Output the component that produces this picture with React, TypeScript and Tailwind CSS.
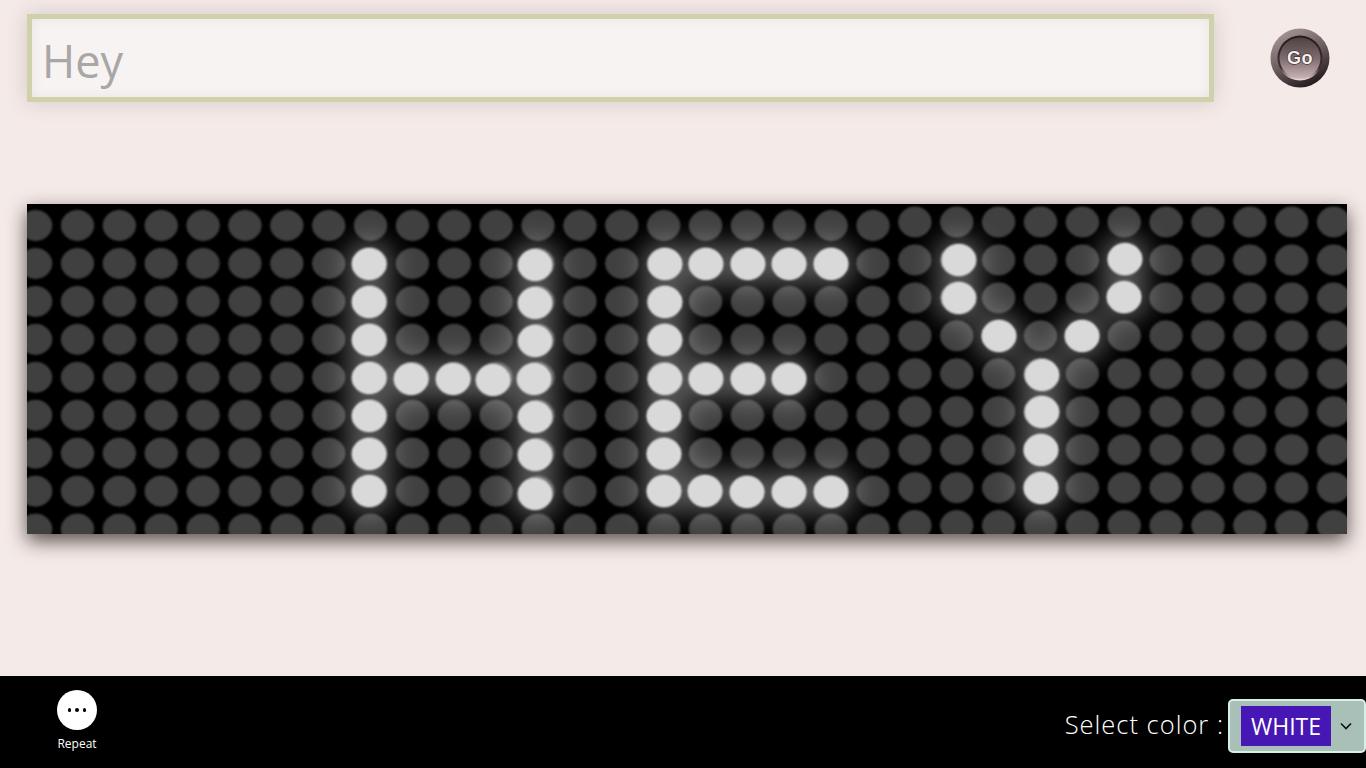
import React from 'react';

const font = { fontFamily: '"Open Sans", "Noto Sans", sans-serif' };

// lit leds of HEY, taken by hand, the photo is a bit wobbly
const lit: [number, number][] = [
  [369, 264], [369, 302], [369, 340], [369, 378], [369, 416], [369, 454], [369, 491],
  [535, 265], [535, 303], [535, 341], [534, 379], [535, 417], [535, 455], [535, 494],
  [411, 379], [453, 379], [493, 380],
  [665, 264], [665, 302], [665, 340], [665, 379], [664, 416], [664, 454], [664, 491],
  [706, 264], [748, 264], [789, 264], [831, 264],
  [706, 379], [748, 379], [789, 379],
  [705, 491], [747, 492], [789, 492], [831, 492],
  [959, 260], [1125, 259], [959, 298], [1124, 297], [999, 336], [1082, 336],
  [1042, 375], [1042, 412], [1041, 450], [1041, 488],
];

const dots: [number, number][] = [];
for (let c = 0; c < 32; c++) {
  for (let r = 0; r < 9; r++) {
    const x = 35.6 + c * 41.87;
    const y = (c > 20 ? 222 : 225.5) + r * 37.95;
    dots.push([x, y]);
  }
}

const LedBoard = () => (
  <svg viewBox="27 204 1320 330" className="block w-full h-full">
    <defs>
      <filter id="glow" x="-50%" y="-50%" width="200%" height="200%">
        <feGaussianBlur stdDeviation="13" />
      </filter>
      <filter id="soft" x="-10%" y="-10%" width="120%" height="120%">
        <feGaussianBlur stdDeviation="0.9" />
      </filter>
    </defs>
    <rect x="27" y="204" width="1320" height="330" fill="#000" />
    <g filter="url(#soft)">
      {dots.map(([x, y], i) => (
        <ellipse key={i} cx={x} cy={y} rx={16.2} ry={15} fill="#3f3f3f" stroke="#494949" strokeWidth={1} />
      ))}
    </g>
    <g filter="url(#glow)" opacity={0.34}>
      {lit.map(([x, y], i) => (
        <ellipse key={i} cx={x} cy={y} rx={25} ry={24} fill="#fff" />
      ))}
    </g>
    <g filter="url(#soft)">
      {lit.map(([x, y], i) => (
        <ellipse key={i} cx={x} cy={y} rx={17} ry={15.6} fill="#d9d9d9" stroke="#ececec" strokeWidth={1} />
      ))}
    </g>
  </svg>
);

const GoButton = () => (
  <svg width="60" height="60" viewBox="0 0 60 60" className="block shrink-0">
    <defs>
      <linearGradient id="ring" x1="0.2" y1="0" x2="0.7" y2="1">
        <stop offset="0" stopColor="#a8989a" />
        <stop offset="0.5" stopColor="#6f5e60" />
        <stop offset="1" stopColor="#1f1719" />
      </linearGradient>
      <linearGradient id="rim" x1="0.5" y1="0" x2="0.5" y2="1">
        <stop offset="0" stopColor="#241b1d" />
        <stop offset="0.72" stopColor="#3d2f31" />
        <stop offset="1" stopColor="#f3e4e7" />
      </linearGradient>
      <linearGradient id="disc" x1="0.5" y1="0" x2="0.5" y2="1">
        <stop offset="0" stopColor="#4f4143" />
        <stop offset="0.5" stopColor="#7d6a6d" />
        <stop offset="1" stopColor="#c9b3b7" />
      </linearGradient>
    </defs>
    <circle cx="30" cy="30" r="29.5" fill="url(#ring)" />
    <circle cx="30" cy="30" r="22.5" fill="url(#rim)" />
    <circle cx="30" cy="30" r="20.5" fill="url(#disc)" />
    <text
      x="30"
      y="36"
      textAnchor="middle"
      fontSize="18"
      fontWeight="700"
      letterSpacing="0.4"
      fill="#f8eef0"
      stroke="#241b1d"
      strokeWidth="1.2"
      paintOrder="stroke"
      style={{ fontFamily: '"Liberation Sans", sans-serif' }}
    >
      Go
    </text>
  </svg>
);

export default function App() {
  return (
    <div className="flex flex-col w-full h-screen overflow-hidden bg-[#f4eae8]" style={font}>
      <main className="flex-1 px-[27px] pt-[14px]">
        <div className="flex items-center">
          <input
            readOnly
            placeholder="Hey"
            className="w-[1187px] h-[88px] border-[5px] border-[#cfd1aa] bg-[#f7f3f2] px-[10px] pt-[4px] text-[45px] text-[#a9a6a6] placeholder:text-[#a9a6a6] outline-none shadow-[0_0_20px_rgba(90,70,70,0.2),inset_0_0_12px_rgba(120,110,110,0.1)]"
            style={{ fontFamily: '"Open Sans", sans-serif' }}
          />
          <div className="ml-[56px]">
            <GoButton />
          </div>
        </div>
        <div className="mt-[102px] w-[1320px] h-[330px] shadow-[0_7px_18px_rgba(30,20,15,0.72)]">
          <LedBoard />
        </div>
      </main>

      <footer className="flex items-start justify-between h-[92px] bg-black shrink-0">
        <div className="flex flex-col items-center w-[80px] ml-[37px] mt-[14px]">
          <div className="flex items-center justify-center gap-[4px] w-[40px] h-[40px] rounded-full bg-white">
            <span className="w-[3.5px] h-[3.5px] rounded-full bg-black" />
            <span className="w-[3.5px] h-[3.5px] rounded-full bg-black" />
            <span className="w-[3.5px] h-[3.5px] rounded-full bg-black" />
          </div>
          <span className="mt-[6px] text-[12px] leading-[16px] text-white">Repeat</span>
        </div>

        <div className="flex items-start mt-[23px]">
          <span className="mt-[7px] text-[25.5px] leading-[36px] font-light tracking-[1px] text-white mr-[4px]">Select color :</span>
          <div className="flex items-center w-[138px] h-[54px] rounded-[5px] border-2 border-[#d8efe7] bg-[#a9c0b9] pl-[11px]">
            <div className="flex items-center justify-center w-[90px] h-[40px] bg-[#4617b4] text-[23px] text-white">
              WHITE
            </div>
            <svg width="12" height="8" viewBox="0 0 12 8" className="ml-[9px]">
              <path d="M1 1.5 L6 6.5 L11 1.5" fill="none" stroke="#111" strokeWidth="1.6" />
            </svg>
          </div>
        </div>
      </footer>
    </div>
  );
}
